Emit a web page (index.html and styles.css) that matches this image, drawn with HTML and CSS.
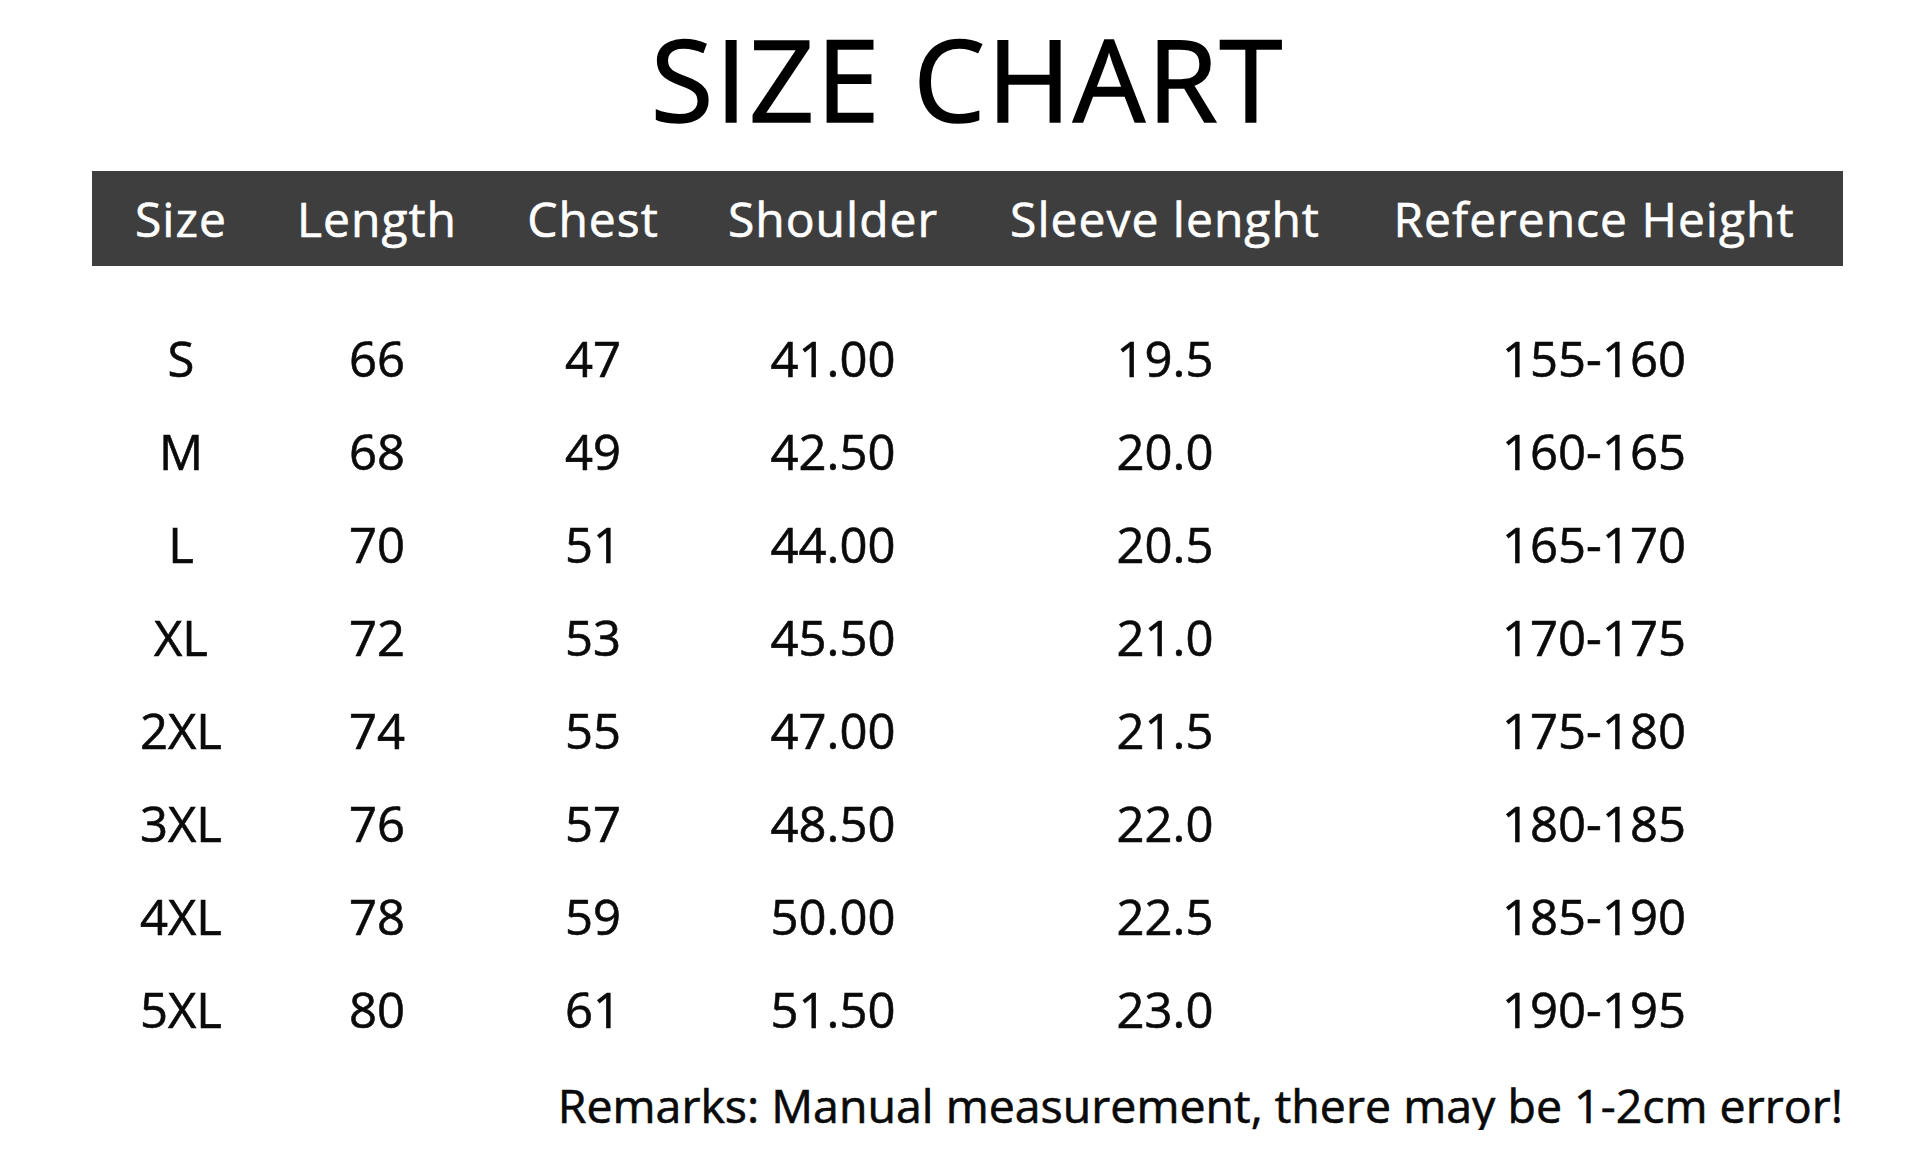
FILE: index.html
```html
<!DOCTYPE html>
<html lang="en">
<head>
<meta charset="utf-8">
<title>Size Chart</title>
<link rel="stylesheet" href="styles.css">
</head>
<body>
<main class="chart">
  <h1 class="title">SIZE CHART</h1>
  <div class="grid head">
    <div>Size</div><div>Length</div><div>Chest</div><div>Shoulder</div><div>Sleeve lenght</div><div>Reference Height</div>
  </div>
  <div class="body">
    <div class="grid row"><div>S</div><div>66</div><div>47</div><div>41.00</div><div>19.5</div><div>155-160</div></div>
    <div class="grid row"><div>M</div><div>68</div><div>49</div><div>42.50</div><div>20.0</div><div>160-165</div></div>
    <div class="grid row"><div>L</div><div>70</div><div>51</div><div>44.00</div><div>20.5</div><div>165-170</div></div>
    <div class="grid row"><div>XL</div><div>72</div><div>53</div><div>45.50</div><div>21.0</div><div>170-175</div></div>
    <div class="grid row"><div>2XL</div><div>74</div><div>55</div><div>47.00</div><div>21.5</div><div>175-180</div></div>
    <div class="grid row"><div>3XL</div><div>76</div><div>57</div><div>48.50</div><div>22.0</div><div>180-185</div></div>
    <div class="grid row"><div>4XL</div><div>78</div><div>59</div><div>50.00</div><div>22.5</div><div>185-190</div></div>
    <div class="grid row"><div>5XL</div><div>80</div><div>61</div><div>51.50</div><div>23.0</div><div>190-195</div></div>
  </div>
  <p class="remarks">Remarks: Manual measurement, there may be 1-2cm error!</p>
</main>
</body>
</html>
```
FILE: styles.css
```css
html, body {
  margin: 0;
  padding: 0;
  background: #ffffff;
}
body {
  font-family: "Open Sans", "Noto Sans", sans-serif;
  color: #0a0a0a;
}
.chart {
  width: 1751px;
  margin-left: 92px;
}
.title {
  margin: 0;
  font-size: 114px;
  font-weight: 400;
  line-height: normal;
  letter-spacing: 2px;
  text-align: center;
  color: #000;
  -webkit-text-stroke: 1.6px #000;
}
.grid {
  display: grid;
  grid-template-columns: 178px 214px 218px 262px 402px 456px;
  text-align: center;
}
.head {
  margin-top: 16px;
  height: 95px;
  align-items: center;
  background: #3e3e3e;
  color: #ffffff;
  font-size: 48px;
  letter-spacing: 1px;
  -webkit-text-stroke: 0.6px #ffffff;
}
.body {
  padding-top: 46px;
}
.row {
  height: 93px;
  line-height: 93px;
  font-size: 49px;
  -webkit-text-stroke: 0.6px #0a0a0a;
}
.remarks {
  margin: 25px 0 0;
  font-size: 46.5px;
  line-height: 49px;
  text-align: right;
  -webkit-text-stroke: 0.6px #0a0a0a;
}
```
